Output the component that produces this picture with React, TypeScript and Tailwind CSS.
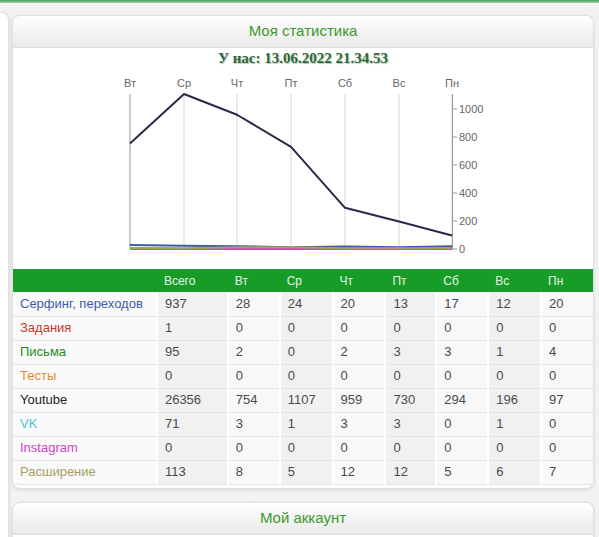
import React from "react";

const days = ["Вт", "Ср", "Чт", "Пт", "Сб", "Вс", "Пн"];

interface Row {
  name: string;
  color: string;
  total: string;
  values: number[];
}

const rows: Row[] = [
  { name: "Серфинг, переходов", color: "#3b5ca8", total: "937", values: [28, 24, 20, 13, 17, 12, 20] },
  { name: "Задания", color: "#c0392b", total: "1", values: [0, 0, 0, 0, 0, 0, 0] },
  { name: "Письма", color: "#1f8a1f", total: "95", values: [2, 0, 2, 3, 3, 1, 4] },
  { name: "Тесты", color: "#e0892e", total: "0", values: [0, 0, 0, 0, 0, 0, 0] },
  { name: "Youtube", color: "#2a2a48", total: "26356", values: [754, 1107, 959, 730, 294, 196, 97] },
  { name: "VK", color: "#4fc6d2", total: "71", values: [3, 1, 3, 3, 0, 1, 0] },
  { name: "Instagram", color: "#cf45c0", total: "0", values: [0, 0, 0, 0, 0, 0, 0] },
  { name: "Расширение", color: "#a5a05e", total: "113", values: [8, 5, 12, 12, 5, 6, 7] },
];

const gridX = [117, 171, 224, 278, 332, 386, 439];
const toY = (v: number) => 182 - v * 0.14;

function Chart() {
  return (
    <svg width="582" height="202" className="block" style={{ fontFamily: "'Liberation Sans', Arial, sans-serif" }}>
      {gridX.map((x, i) => (
        <g key={x}>
          <line x1={x} y1={27} x2={x} y2={182} stroke={i === 0 ? "#9a9a9a" : "#d4d4d4"} strokeWidth="1" />
          <text x={x} y={20} fontSize="11" fill="#666" textAnchor="middle">
            {days[i]}
          </text>
        </g>
      ))}
      <line x1={439.5} y1={27} x2={439.5} y2={182} stroke="#9a9a9a" />
      {[0, 200, 400, 600, 800, 1000].map((v) => (
        <g key={v}>
          <line x1={439} y1={toY(v)} x2={444} y2={toY(v)} stroke="#9a9a9a" />
          <text x={446} y={toY(v) + 4} fontSize="11" fill="#666">
            {v}
          </text>
        </g>
      ))}
      <line x1={117} y1={182.5} x2={439} y2={182.5} stroke="#9a9a9a" />
      {rows.map((r) => (
        <polyline
          key={r.name}
          fill="none"
          stroke={r.color}
          strokeWidth="2"
          strokeLinejoin="round"
          points={r.values.map((v, i) => `${gridX[i]},${toY(v)}`).join(" ")}
        />
      ))}
    </svg>
  );
}

const colBg = ["bg-[#f1f1f1]", "bg-[#f8f8f8]", "bg-[#f1f1f1]", "bg-[#f8f8f8]", "bg-[#f1f1f1]", "bg-[#f8f8f8]", "bg-[#f1f1f1]", "bg-[#f8f8f8]"];
const colW = ["w-[71px]", "w-[52px]", "w-[53px]", "w-[53px]", "w-[51px]", "w-[52px]", "w-[53px]", "w-[52px]"];

function PanelHeader({ title }: { title: string }) {
  return (
    <div className="h-[32px] flex items-center justify-center bg-gradient-to-b from-white to-[#e9e9e9] border-b border-[#dedede] rounded-t-[8px] text-[15px] text-[#3c9a2a]">
      {title}
    </div>
  );
}

export default function App() {
  return (
    <div
      className="w-[599px] h-[537px] overflow-hidden bg-[#f2f2f2] text-[13px]"
      style={{ fontFamily: "Tahoma, 'Liberation Sans', 'DejaVu Sans', sans-serif" }}
    >
      <div className="h-[3px] bg-gradient-to-b from-[#4aa05a] to-[#9fd0a8]" />
      <div className="flex pt-[9px]">
        {/* левая колонка */}
        <div className="w-[9px] h-[600px] bg-white border-r border-t border-[#e2e2e2] rounded-tr-[8px] shadow-[1px_0_3px_rgba(0,0,0,0.08)]" />
        <div className="w-[582px] ml-[3px] pt-[3px] flex flex-col gap-[13px]">
          <div className="bg-white border border-[#e0e0e0] rounded-[8px] shadow-[0_1px_3px_rgba(0,0,0,0.12)] pb-[3px]">
            <PanelHeader title="Моя статистика" />
            <div
              className="h-[19px] pt-[1px] flex items-center justify-center text-[15px] font-bold text-[#2b6a3a]"
              style={{ fontFamily: "'Liberation Serif', 'Times New Roman', serif", textShadow: "1px 1px 1px rgba(40,90,50,0.35)" }}
            >
              У нас: 13.06.2022 21.34.53
            </div>
            <Chart />
            <table className="w-[580px] border-collapse text-[13px]">
              <thead>
                <tr className="h-[23px] bg-[#179c28] text-[#e6f4e6] text-[12px]">
                  <th className="w-[144px]" />
                  {["Всего", ...days].map((d, i) => (
                    <th key={d} className={`${colW[i]} text-left font-normal pl-[7px]`}>
                      {d}
                    </th>
                  ))}
                </tr>
              </thead>
              <tbody>
                {rows.map((r) => (
                  <tr key={r.name} className="h-[24px]">
                    <td
                      className="pl-[7px] bg-[#fafafa] border-r-2 border-b border-r-white border-b-[#e4e4e4] whitespace-nowrap"
                      style={{ color: r.color === "#2a2a48" ? "#222" : r.color }}
                    >
                      {r.name}
                    </td>
                    {[r.total, ...r.values.map(String)].map((v, i) => (
                      <td
                        key={i}
                        className={`${colBg[i]} pl-[7px] text-[#4a4a4a] border-r-2 border-b border-r-white border-b-[#e4e4e4] last:border-r-0`}
                      >
                        {v}
                      </td>
                    ))}
                  </tr>
                ))}
              </tbody>
            </table>
          </div>
          <div className="bg-white border border-[#e0e0e0] rounded-[8px] shadow-[0_1px_3px_rgba(0,0,0,0.12)] h-[80px]">
            <PanelHeader title="Мой аккаунт" />
          </div>
        </div>
      </div>
    </div>
  );
}
